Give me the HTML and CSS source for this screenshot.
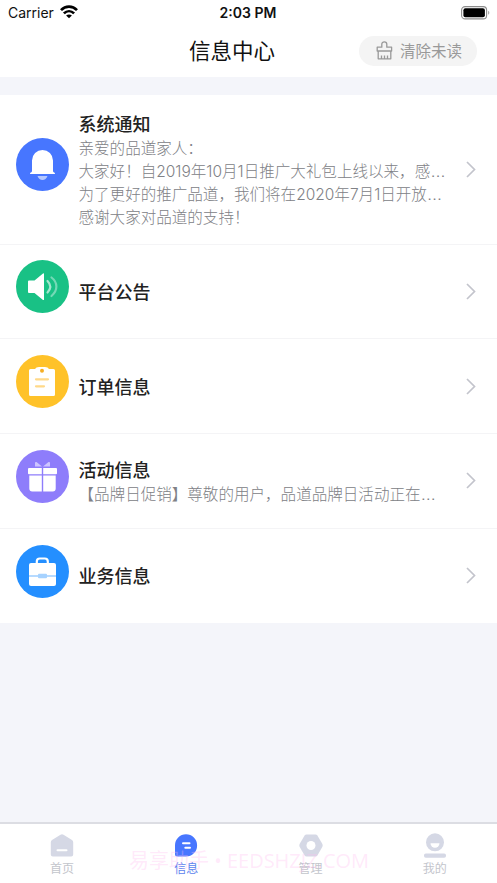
FILE: index.html
```html
<!DOCTYPE html>
<html lang="zh-CN">
<head>
<meta charset="utf-8">
<meta name="viewport" content="width=device-width, initial-scale=1">
<title>信息中心</title>
<link rel="stylesheet" href="styles.css">
</head>
<body>
<div class="app">
  <header class="top">
    <div class="status">
      <div class="carrier"><span>Carrier</span>
        <svg class="wifi" width="18" height="14" viewBox="0 0 18 14" fill="none" stroke="#000" stroke-width="2.700"><path d="M1 5.100C5.500.5 12.500.5 17 5.100"/><path d="M3.900 8.400c3-2.900 7.200-2.900 10.200 0"/><path d="M9 13.200 6.100 10.500c1.700-1.500 4.100-1.500 5.800 0z" fill="#000" stroke="none"/></svg>
      </div>
      <div class="time">2:03 PM</div>
      <svg class="battery" width="29" height="14" viewBox="0 0 29 14"><rect x=".6" y=".6" width="25" height="12.300" rx="3.500" fill="none" stroke="#8c8c8c" stroke-width="1.100"/><rect x="2.400" y="2.300" width="21.500" height="9" rx="2" fill="#000"/><path d="M27.300 4.700c1.300.5 1.300 3.600 0 4.100z" fill="#8c8c8c"/></svg>
    </div>
    <div class="nav">
      <h1>信息中心</h1>
      <button class="clear">
        <svg width="17" height="19" viewBox="0 0 17 19" fill="none" stroke="#999" stroke-width="1.300" stroke-linejoin="round"><path d="M1.200 10V6.200h4.600V3.300a2.500 2.500 0 0 1 5 0v2.900h4.800V10zM2.200 10v7.800h12.600V10M5.500 17.500v-3M8.500 17.500v-3M11.500 17.500v-3"/></svg>
        <span>清除未读</span>
      </button>
    </div>
  </header>

  <main class="list">
    <section class="row row-tall">
      <svg class="icon" viewBox="0 0 53 53"><circle cx="26.500" cy="26.500" r="26.500" fill="#4776ff"/><path d="M16 33V22.500a10.500 10.500 0 0 1 21 0V33q0 1 1.200 1.500.8.500.8 1.400H14q0-.9.800-1.400Q16 34 16 33z" fill="#fff"/><path d="M21.500 38h10q-1.500 4-5 4t-5-4z" fill="#b5c8ff"/></svg>
      <div class="body">
        <h2>系统通知</h2>
        <p>亲爱的品道家人：</p>
        <p>大家好！自<span class="num">2019</span>年<span class="num">10</span>月<span class="num">1</span>日推广大礼包上线以来，感…</p>
        <p>为了更好的推广品道，我们将在<span class="num">2020</span>年<span class="num">7</span>月<span class="num">1</span>日开放…</p>
        <p>感谢大家对品道的支持！</p>
      </div>
      <svg class="chevron" viewBox="0 0 10 17"><path d="m1 1 7.500 7.500L1 16"/></svg>
    </section>
    <section class="row">
      <svg class="icon" viewBox="0 0 53 53"><circle cx="26.500" cy="26.500" r="26.500" fill="#19c185"/><path d="M13 20.500h5.500l8.500-7q1-.6 1 .6v25.300q0 1.100-1 .5l-8.500-7H13q-1 0-1-1v-10.400q0-1 1-1z" fill="#fff"/><g fill="none" stroke-width="2.200" stroke-linecap="round"><path d="M31.500 21q5.500 5.500 0 11.500" stroke="#a3e6ce"/><path d="M35.500 17.500c6.500 5 6.500 13 0 18.500" stroke="#75d9b6"/></g></svg>
      <div class="body"><h2>平台公告</h2></div>
      <svg class="chevron" viewBox="0 0 10 17"><path d="m1 1 7.500 7.500L1 16"/></svg>
    </section>
    <section class="row">
      <svg class="icon" viewBox="0 0 53 53"><circle cx="26.500" cy="26.500" r="26.500" fill="#ffc229"/><path d="M14.500 14H19q1-2 4-2h6q3 0 4 2h4.500q1.500 0 1.500 1.500v24q0 1.500-1.500 1.500h-23q-1.500 0-1.500-1.500v-24q0-1.500 1.500-1.500z" fill="#fff"/><circle cx="26" cy="15.700" r="2" fill="#f5ae24"/><path d="M20 24.300h12M20 31.300h8" stroke="#ffd989" stroke-width="2.200" stroke-linecap="round"/></svg>
      <div class="body"><h2>订单信息</h2></div>
      <svg class="chevron" viewBox="0 0 10 17"><path d="m1 1 7.500 7.500L1 16"/></svg>
    </section>
    <section class="row">
      <svg class="icon" viewBox="0 0 53 53"><circle cx="26.500" cy="26.500" r="26.500" fill="#8e7dfb"/><path d="M26 16.500 20.500 12q-1.500-.5-1.500 1v3.500zM27 16.500l5.500-4.500q1.500-.5 1.500 1v3.500z" fill="#cdc5ff"/><path d="M13 18h12.800v6.200H13q-1 0-1-1V19q0-1 1-1zM27.200 18H40q1 0 1 1v4.200q0 1-1 1H27.200zM13.300 25.600h12.500v16H16.300q-3 0-3-3zM27.200 25.600h12.500v13q0 3-3 3h-9.500z" fill="#fff"/></svg>
      <div class="body"><h2>活动信息</h2><p>【品牌日促销】尊敬的用户，品道品牌日活动正在…</p></div>
      <svg class="chevron" viewBox="0 0 10 17"><path d="m1 1 7.500 7.500L1 16"/></svg>
    </section>
    <section class="row">
      <svg class="icon" viewBox="0 0 53 53"><circle cx="26.500" cy="26.500" r="26.500" fill="#248fff"/><path d="M20.800 19v-2.500q0-3 3-3h5q3 0 3 3V19" fill="none" stroke="#fff" stroke-width="2.200"/><rect x="13" y="18" width="27" height="23" rx="2" fill="#fff"/><path d="M13 31h27" stroke="#8fc6ff" stroke-width="1.300"/><rect x="22" y="28.700" width="9" height="4.500" rx="1" fill="#a6d2ff"/></svg>
      <div class="body"><h2>业务信息</h2></div>
      <svg class="chevron" viewBox="0 0 10 17"><path d="m1 1 7.500 7.500L1 16"/></svg>
    </section>
  </main>

  <footer class="tabs">
    <div class="tab">
      <svg viewBox="0 0 26 26"><path d="m11.500 1.800q1.500-1 3 0l8.500 5.200q1.200.8 1.200 2.200v12.300q0 2-2 2H3.800q-2 0-2-2V9.200Q1.800 7.800 3 7z" fill="#d5d8e5"/><path d="M8.500 17.200h9" stroke="#fff" stroke-width="2" stroke-linecap="round"/></svg>
      <span>首页</span>
    </div>
    <div class="tab active">
      <svg viewBox="0 0 26 26"><path d="M13 1.300a11 11 0 1 1 0 22.200H4q-2 0-2-2v-9.200a11 11 0 0 1 11-11z" fill="#4776ff"/><path d="M10 10.300h6.500M12.300 14.800h4.700" stroke="#fff" stroke-width="2" stroke-linecap="round"/></svg>
      <span>信息</span>
    </div>
    <div class="tab">
      <svg viewBox="0 0 26 26"><path d="M8.500 1.500h9q1.200 0 1.900 1.100l5 8.500q.6 1.300 0 2.600l-5 8.700q-.7 1.100-1.900 1.100h-9q-1.200 0-1.900-1.100l-5-8.700q-.6-1.300 0-2.600l5-8.500Q7.300 1.500 8.500 1.500z" fill="#d5d8e5"/><circle cx="13" cy="12.500" r="4.500" fill="#fff"/></svg>
      <span>管理</span>
    </div>
    <div class="tab">
      <svg viewBox="0 0 26 26"><circle cx="13" cy="9.300" r="9" fill="#d5d8e5"/><path d="M8.500 10.300h9a4.500 4.500 0 0 1-9 0z" fill="#fff"/><rect x="2" y="20.400" width="22" height="4.300" rx="1.800" fill="#d5d8e5"/></svg>
      <span>我的</span>
    </div>
    <div class="watermark">易享助手 • EEDSHZJZ.COM</div>
  </footer>
</div>
</body>
</html>
```
FILE: styles.css
```css
* { box-sizing: border-box; }
body {
  margin: 0;
  background: #f4f5fa;
  font-family: "Liberation Sans", "Noto Sans CJK SC", sans-serif;
}
h1, h2, p { margin: 0; }
svg { display: block; flex: none; }
.app { height: 883px; display: flex; flex-direction: column; overflow: hidden; }

.top { height: 77px; background: #fff; flex: none; }
.status {
  height: 26px;
  padding: 0 7px 0 8px;
  display: grid;
  grid-template-columns: 1fr auto 1fr;
  align-items: center;
  font: 14px/26px Inter, sans-serif;
  color: #111;
}
.carrier { display: flex; align-items: center; gap: 6px; }
.wifi { margin-top: -2px; }
.time { font-weight: 600; margin-left: -2px; }
.battery { justify-self: end; margin-top: -1px; }
.nav {
  height: 51px;
  padding: 0 20px 2px 19px;
  display: grid;
  grid-template-columns: 118px 1fr 118px;
  align-items: center;
}
h1 {
  grid-column: 2;
  font-size: 21.500px;
  line-height: 30px;
  font-weight: 400;
  text-align: center;
  margin: 2px 32px 0 0;
  color: #111;
  white-space: nowrap;
}
.clear {
  height: 30px;
  border: 0;
  border-radius: 15px;
  padding: 0 0 0 17px;
  display: flex;
  align-items: center;
  gap: 7px;
  background: #f4f4f4;
  color: #999;
  font: 15.500px/28px "Noto Sans CJK SC", sans-serif;
  white-space: nowrap;
}
.clear span { margin-top: -2px; }

.list { margin-top: 18px; background: #fff; flex: none; }
.row {
  height: 94.700px;
  padding: 0 21px 0 16px;
  display: flex;
  align-items: center;
  border-bottom: 1px solid #f4f4f6;
}
.row:last-child { border-bottom: 0; height: 94px; }
.row-tall { height: 149.500px; }
.icon { width: 53px; height: 53px; margin-top: -9px; }
.body { flex: 1; min-width: 0; margin: 3px 0 0 9.500px; }
h2 { font-size: 18px; line-height: 26px; font-weight: 500; color: #222; }
p {
  font-size: 15.550px;
  line-height: 22.800px;
  font-weight: 300;
  color: #808186;
  white-space: nowrap;
}
h2 + p { margin-top: .5px; }
.num { font-family: Inter, sans-serif; font-size: 15.500px; line-height: 1; }
.chevron { width: 10px; height: 17px; fill: none; stroke: #c3c4cc; stroke-width: 1.700; }

.tabs {
  position: relative;
  height: 61px;
  margin-top: auto;
  border-top: 2px solid #dcdde3;
  background: #fff;
  display: grid;
  grid-template-columns: repeat(4, 1fr);
  flex: none;
}
.tab {
  display: flex;
  flex-direction: column;
  align-items: center;
  padding-top: 9px;
  font-size: 12px;
  line-height: 20px;
  color: #c3c5cc;
}
.tab svg { width: 26px; height: 26px; }
.active { color: #5b83ee; }
.watermark {
  position: absolute;
  left: 129px;
  top: 24px;
  font: 20px/26px "Open Sans", "Noto Sans CJK SC", sans-serif;
  color: rgba(255, 190, 240, .32);
  white-space: nowrap;
}
```
